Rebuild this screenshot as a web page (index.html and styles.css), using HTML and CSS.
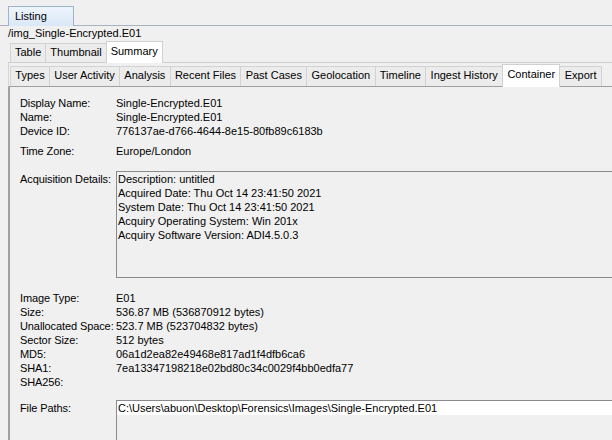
FILE: index.html
```html
<!DOCTYPE html>
<html>
<head>
<meta charset="utf-8">
<title>Listing</title>
<link rel="stylesheet" href="styles.css">
</head>
<body>
<div class="app">
  <div class="toptabs">
    <div class="toptab">Listing</div>
  </div>
  <div class="path">/img_Single-Encrypted.E01</div>
  <div class="viewtabs">
    <div class="tab">Table</div>
    <div class="tab">Thumbnail</div>
    <div class="tab selected">Summary</div>
  </div>
  <div class="panel">
    <div class="subtabs">
      <div class="tab">Types</div>
      <div class="tab">User Activity</div>
      <div class="tab">Analysis</div>
      <div class="tab">Recent Files</div>
      <div class="tab">Past Cases</div>
      <div class="tab">Geolocation</div>
      <div class="tab">Timeline</div>
      <div class="tab">Ingest History</div>
      <div class="tab selected">Container</div>
      <div class="tab">Export</div>
    </div>
    <div class="details">
      <div class="grid">
        <div class="label">Display Name:</div><div class="value">Single-Encrypted.E01</div>
        <div class="label">Name:</div><div class="value">Single-Encrypted.E01</div>
        <div class="label">Device ID:</div><div class="value">776137ae-d766-4644-8e15-80fb89c6183b</div>
      </div>
      <div class="grid gap-tz">
        <div class="label">Time Zone:</div><div class="value">Europe/London</div>
      </div>
      <div class="grid gap-box">
        <div class="label boxlabel">Acquisition Details:</div>
        <div class="textbox acq">
          <div>Description: untitled</div>
          <div>Acquired Date: Thu Oct 14 23:41:50 2021</div>
          <div>System Date: Thu Oct 14 23:41:50 2021</div>
          <div>Acquiry Operating System: Win 201x</div>
          <div>Acquiry Software Version: ADI4.5.0.3</div>
        </div>
      </div>
      <div class="grid gap-box">
        <div class="label">Image Type:</div><div class="value">E01</div>
        <div class="label">Size:</div><div class="value">536.87 MB (536870912 bytes)</div>
        <div class="label">Unallocated Space:</div><div class="value">523.7 MB (523704832 bytes)</div>
        <div class="label">Sector Size:</div><div class="value">512 bytes</div>
        <div class="label">MD5:</div><div class="value">06a1d2ea82e49468e817ad1f4dfb6ca6</div>
        <div class="label">SHA1:</div><div class="value">7ea13347198218e02bd80c34c0029f4bb0edfa77</div>
        <div class="label">SHA256:</div><div class="value"></div>
      </div>
      <div class="grid gap-paths fill">
        <div class="label boxlabel">File Paths:</div>
        <div class="textbox paths">
          <div class="pathrow">C:\Users\abuon\Desktop\Forensics\Images\Single-Encrypted.E01</div>
        </div>
      </div>
    </div>
  </div>
</div>
</body>
</html>
```
FILE: styles.css
```css
html, body {
  margin: 0;
  padding: 0;
}
body {
  width: 612px;
  height: 440px;
  overflow: hidden;
  background: #f0f0f0;
  font-family: "Liberation Sans", Arial, sans-serif;
  font-size: 11px;
  line-height: 14px;
  color: #000;
}
.app {
  padding-top: 6px;
}
.toptabs {
  display: flex;
  align-items: flex-end;
  height: 19px;
  padding-left: 8px;
  border-bottom: 1px solid #a9b3bf;
}
.toptab {
  box-sizing: border-box;
  width: 66px;
  height: 20px;
  margin-bottom: -1px;
  padding: 2px 0 0 6px;
  border: 1px solid #9db4cc;
  border-bottom: none;
  background: linear-gradient(#eef5fd, #dae8f7);
}
.path {
  height: 15px;
  padding-left: 8px;
  white-space: nowrap;
}
.viewtabs {
  display: flex;
  align-items: flex-end;
  box-sizing: border-box;
  height: 22px;
  margin-left: 8px;
  padding-left: 2px;
  border-bottom: 1px solid #cfcfcf;
}
.tab {
  box-sizing: border-box;
  height: 19px;
  padding: 1px 4px 0;
  border: 1px solid #d2d2d2;
  border-bottom: none;
  background: #ececec;
  white-space: nowrap;
}
.tab + .tab {
  margin-left: -1px;
}
.tab.selected {
  position: relative;
  z-index: 1;
  height: 22px;
  margin-bottom: -1px;
  padding-top: 2px;
  background: #ffffff;
  border-color: #d0d0d0;
}
.subtabs {
  display: flex;
  align-items: flex-end;
  box-sizing: border-box;
  height: 24px;
  margin-left: 8px;
  padding-left: 1px;
  border-left: 1px solid #d6d6d6;
  border-bottom: 1px solid #a0a0a0;
}
.subtabs .tab {
  height: 20px;
  padding: 1px 4.3px 0;
}
.subtabs .tab.selected {
  height: 23px;
  padding-top: 2px;
}
.details {
  box-sizing: border-box;
  display: flex;
  flex-direction: column;
  height: 353px;
  margin-left: 8px;
  border-left: 2px solid #a0a0a0;
  padding: 9px 0 0 10px;
}
.grid {
  display: grid;
  grid-template-columns: 96px 1fr;
}
.label, .value {
  white-space: nowrap;
  height: 14px;
}
.label {
  letter-spacing: -0.1px;
}
.gap-tz {
  margin-top: 6px;
}
.gap-box {
  margin-top: 13px;
}
.gap-paths {
  margin-top: 11px;
}
.fill {
  flex: 1;
}
.boxlabel {
  padding-top: 1px;
}
.textbox {
  border: 1px solid #8a8a8e;
  border-right: none;
  padding-left: 1px;
  white-space: nowrap;
  overflow: hidden;
}
.acq {
  height: 105px;
}
.paths {
  border-bottom: none;
  padding-left: 0;
}
.pathrow {
  background: #ffffff;
  padding-left: 1px;
}
```
